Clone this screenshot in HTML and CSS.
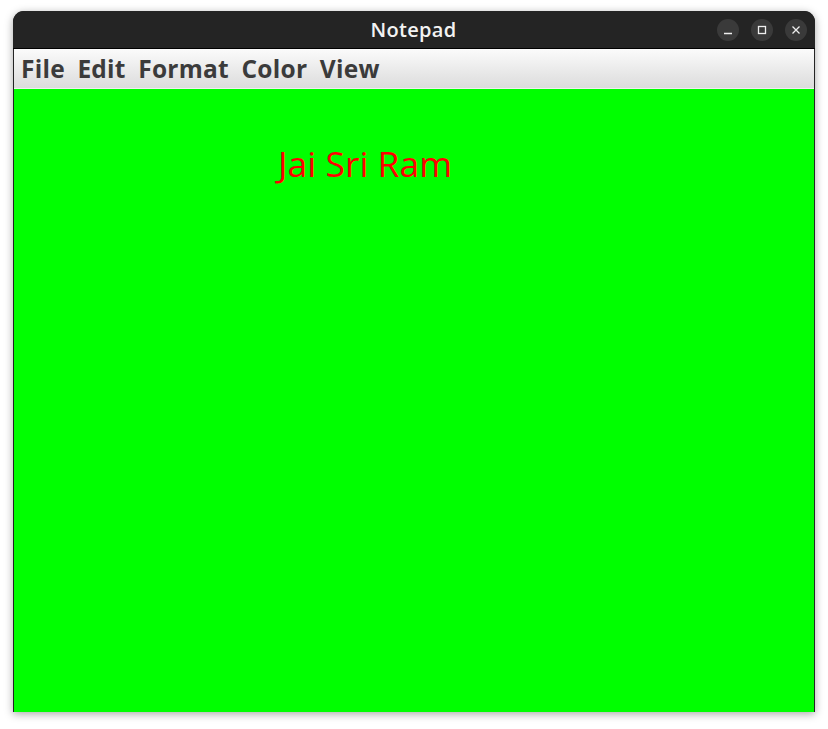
FILE: index.html
```html
<!DOCTYPE html>
<html>
<head>
<meta charset="utf-8">
<link rel="stylesheet" href="styles.css">
</head>
<body>
<div class="window">
  <div class="titlebar">
    <div class="title">Notepad</div>
    <div class="controls">
      <div class="btn"><svg width="22" height="22" viewBox="0 0 22 22"><path d="M7 14.5h8" stroke="#eee" stroke-width="1.3"/></svg></div>
      <div class="btn"><svg width="22" height="22" viewBox="0 0 22 22"><rect x="7.5" y="7.5" width="7" height="7" fill="none" stroke="#eee" stroke-width="1.3"/></svg></div>
      <div class="btn"><svg width="22" height="22" viewBox="0 0 22 22"><path d="M7.5 7.5l7 7M14.5 7.5l-7 7" stroke="#eee" stroke-width="1.3"/></svg></div>
    </div>
  </div>
  <div class="menubar">
    <span class="menu">File</span>
    <span class="menu">Edit</span>
    <span class="menu">Format</span>
    <span class="menu">Color</span>
    <span class="menu">View</span>
  </div>
  <div class="content">
    <div class="text">Jai Sri Ram</div>
  </div>
</div>
</body>
</html>
```
FILE: styles.css
```css
html, body {
  margin: 0;
  padding: 0;
  background: #ffffff;
  height: 729px;
  overflow: hidden;
}
body {
  padding: 11px 13px 0 13px;
  font-family: "Open Sans", "DejaVu Sans", sans-serif;
}
.window {
  width: 802px;
  height: 701px;
  box-sizing: border-box;
  display: flex;
  flex-direction: column;
  border-radius: 11px 11px 0 0;
  background: #242424;
  box-shadow: 0 2px 8px rgba(0,0,0,0.35);
  overflow: hidden;
}
.titlebar {
  height: 37px;
  flex: none;
  display: flex;
  align-items: center;
  justify-content: center;
  position: relative;
  background: #242424;
  border-bottom: 1px solid #000;
}
.title {
  color: #f2f2f2;
  font-size: 20px;
  font-weight: 600;
  letter-spacing: 0.3px;
  margin-left: -1px;
}
.controls {
  position: absolute;
  right: 8px;
  top: 8px;
  display: flex;
  gap: 12px;
}
.btn {
  width: 22px;
  height: 22px;
  border-radius: 50%;
  background: #3a3a3a;
}
.btn svg { display: block; }
.menubar {
  flex: none;
  height: 39px;
  margin: 0 1px;
  display: flex;
  align-items: center;
  gap: 12.5px;
  padding-left: 7px;
  background: linear-gradient(#fbfbfb, #dcdcdc);
  border-bottom: 1px solid #f0f0f0;
}
.menu {
  font-size: 24.5px;
  font-weight: 700;
  color: #3b3b3b;
  letter-spacing: 0.25px;
}
.content {
  flex: 1;
  margin: 0 1px;
  background: #00ff00;
  padding-left: 264px;
  padding-top: 52px;
}
.text {
  color: #ff0000;
  font-size: 35.5px;
  line-height: 44px;
}
```
